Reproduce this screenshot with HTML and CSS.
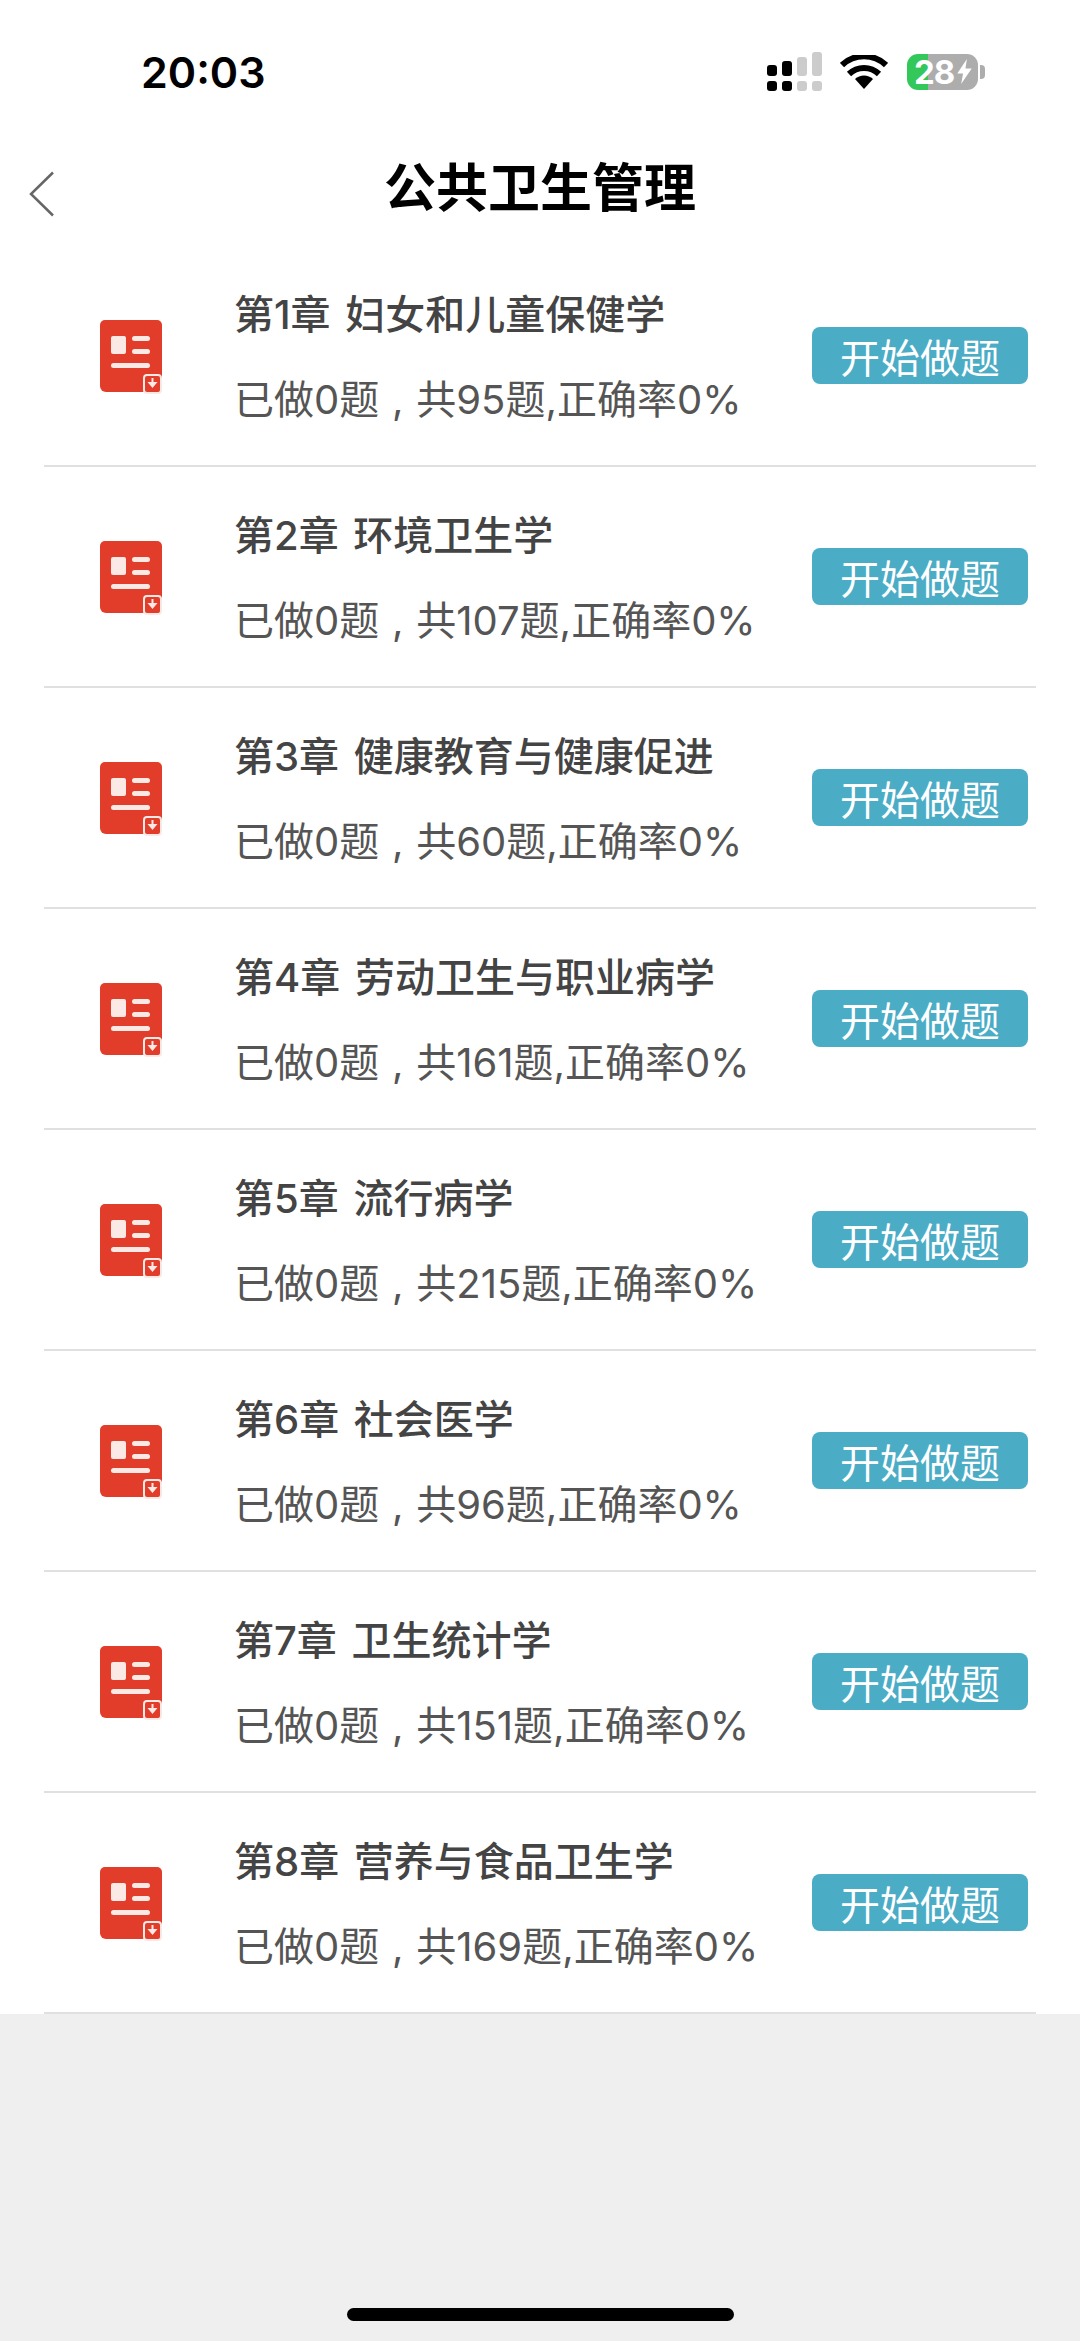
FILE: index.html
```html
<!DOCTYPE html>
<html lang="zh-CN">
<head>
  <meta charset="UTF-8">
  <title>公共卫生管理</title>
  <link rel="stylesheet" href="styles.css">
</head>
<body>
  <svg class="defs" width="0" height="0">
    <symbol id="book" viewBox="0 0 62 74">
      <path fill="#e23c2a" d="M5 0h52a5 5 0 0 1 5 5v62l-2 5H6a6 6 0 0 1-6-6V5a5 5 0 0 1 5-5z"/>
      <rect x="11" y="16" width="15" height="18" rx="2" fill="#fbe9e6"/>
      <rect x="32" y="16" width="18" height="5" rx="2.5" fill="#fbe9e6"/>
      <rect x="32" y="29" width="18" height="5" rx="2.5" fill="#fbe9e6"/>
      <rect x="11" y="43" width="39" height="5" rx="2.5" fill="#fbe9e6"/>
      <rect x="44" y="55" width="17" height="18" rx="3" fill="#e23c2a" stroke="#fbe9e6" stroke-width="2"/>
      <path d="M52.500 58v5" fill="none" stroke="#fbe9e6" stroke-width="2"/>
      <path d="M47.500 62h10l-5 6z" fill="#fbe9e6"/>
    </symbol>
  </svg>

  <div class="status-bar">
    <span class="time">20:03</span>
    <div class="status-icons">
      <svg class="signal" width="55" height="39" viewBox="0 0 55 39">
        <rect x="0" y="13" width="10" height="11" rx="3" fill="#000"/>
        <rect x="15" y="9" width="10" height="15" rx="3" fill="#000"/>
        <rect x="30" y="5" width="10" height="19" rx="3" fill="#ccc"/>
        <rect x="45" y="0" width="10" height="24" rx="3" fill="#ccc"/>
        <rect x="0" y="29" width="10" height="10" rx="3" fill="#000"/>
        <rect x="15" y="29" width="10" height="10" rx="3" fill="#000"/>
        <rect x="30" y="29" width="10" height="10" rx="3" fill="#ccc"/>
        <rect x="45" y="29" width="10" height="10" rx="3" fill="#ccc"/>
      </svg>
      <svg class="wifi" width="48" height="34" viewBox="0 0 48 34">
        <path d="M24 34l-9-10a13 13 0 0 1 18 0z" fill="#000"/>
        <path d="M9 19a21.500 21.500 0 0 1 30 0" fill="none" stroke="#000" stroke-width="6"/>
        <path d="M2 10a32 32 0 0 1 44 0" fill="none" stroke="#000" stroke-width="6"/>
      </svg>
      <div class="battery">
        <div class="battery-body">
          <span class="battery-num">28</span>
          <svg width="17" height="25" viewBox="0 0 15 26"><path d="M10 0L0 15h6l-2 11L15 10H8.500z" fill="#fff"/></svg>
        </div>
        <div class="battery-cap"></div>
      </div>
    </div>
  </div>

  <header class="nav">
    <svg class="back" width="26" height="46" viewBox="0 0 26 46">
      <path d="M24 1.500L2 23l22 21.500" fill="none" stroke="#666" stroke-width="2.500"/>
    </svg>
    <h1>公共卫生管理</h1>
  </header>

  <ul class="list">
    <li class="row">
      <svg class="row-icon"><use href="#book"/></svg>
      <div class="row-text">
        <div class="row-title">第1章 妇女和儿童保健学</div>
        <div class="row-sub">已做0题 , 共95题,正确率0%</div>
      </div>
      <button class="start">开始做题</button>
    </li>
    <li class="row">
      <svg class="row-icon"><use href="#book"/></svg>
      <div class="row-text">
        <div class="row-title">第2章 环境卫生学</div>
        <div class="row-sub">已做0题 , 共107题,正确率0%</div>
      </div>
      <button class="start">开始做题</button>
    </li>
    <li class="row">
      <svg class="row-icon"><use href="#book"/></svg>
      <div class="row-text">
        <div class="row-title">第3章 健康教育与健康促进</div>
        <div class="row-sub">已做0题 , 共60题,正确率0%</div>
      </div>
      <button class="start">开始做题</button>
    </li>
    <li class="row">
      <svg class="row-icon"><use href="#book"/></svg>
      <div class="row-text">
        <div class="row-title">第4章 劳动卫生与职业病学</div>
        <div class="row-sub">已做0题 , 共161题,正确率0%</div>
      </div>
      <button class="start">开始做题</button>
    </li>
    <li class="row">
      <svg class="row-icon"><use href="#book"/></svg>
      <div class="row-text">
        <div class="row-title">第5章 流行病学</div>
        <div class="row-sub">已做0题 , 共215题,正确率0%</div>
      </div>
      <button class="start">开始做题</button>
    </li>
    <li class="row">
      <svg class="row-icon"><use href="#book"/></svg>
      <div class="row-text">
        <div class="row-title">第6章 社会医学</div>
        <div class="row-sub">已做0题 , 共96题,正确率0%</div>
      </div>
      <button class="start">开始做题</button>
    </li>
    <li class="row">
      <svg class="row-icon"><use href="#book"/></svg>
      <div class="row-text">
        <div class="row-title">第7章 卫生统计学</div>
        <div class="row-sub">已做0题 , 共151题,正确率0%</div>
      </div>
      <button class="start">开始做题</button>
    </li>
    <li class="row">
      <svg class="row-icon"><use href="#book"/></svg>
      <div class="row-text">
        <div class="row-title">第8章 营养与食品卫生学</div>
        <div class="row-sub">已做0题 , 共169题,正确率0%</div>
      </div>
      <button class="start">开始做题</button>
    </li>
  </ul>

  <div class="bottom">
    <div class="home-bar"></div>
  </div>
</body>
</html>
```

FILE: styles.css
```css
* {
  box-sizing: border-box;
}
html, body {
  margin: 0;
  padding: 0;
}
body {
  width: 1080px;
  height: 2341px;
  display: flex;
  flex-direction: column;
  background-color: #fff;
  font-family: Inter, "Noto Sans CJK SC", sans-serif;
  overflow: hidden;
}
.defs {
  position: absolute;
}
.status-bar {
  height: 140px;
  flex: none;
  display: flex;
  justify-content: space-between;
  align-items: center;
  padding: 3px 95px 0 141px;
}
.time {
  font-family: Inter, sans-serif;
  font-size: 43px;
  font-weight: 600;
  color: #000;
}
.status-icons {
  display: flex;
  align-items: center;
}
.signal {
  margin-right: 18px;
}
.wifi {
  margin-right: 19px;
}
.battery {
  display: flex;
  align-items: center;
}
.battery-body {
  width: 71px;
  height: 36px;
  border-radius: 11px;
  background: linear-gradient(to right, #34c759 0, #34c759 21px, #adadad 21px);
  display: flex;
  align-items: center;
  padding-left: 7px;
  gap: 2px;
}
.battery-num {
  font-family: Inter, sans-serif;
  font-size: 33px;
  line-height: 36px;
  font-weight: 700;
  letter-spacing: -1px;
  color: #fff;
}
.battery-cap {
  width: 5px;
  height: 14px;
  margin-left: 2px;
  border-radius: 0 4px 4px 0;
  background-color: #adadad;
}
.nav {
  height: 106px;
  flex: none;
  display: flex;
  align-items: center;
  justify-content: center;
  position: relative;
  padding-bottom: 18px;
}
.back {
  position: absolute;
  left: 29px;
  top: 31px;
}
.nav h1 {
  margin: 0;
  font-size: 52px;
  font-weight: 700;
  color: #000;
}
.list {
  list-style: none;
  margin: 0;
  padding: 0 44px;
  flex: none;
}
.row {
  height: 221px;
  display: flex;
  align-items: center;
  border-bottom: 2px solid #e0e0e0;
}
.row-icon {
  width: 62px;
  height: 74px;
  flex: none;
  margin: 2px 0 0 56px;
}
.row-text {
  flex: 1;
  margin-left: 72px;
  padding-top: 3px;
  display: flex;
  flex-direction: column;
  gap: 41px;
  min-width: 0;
}
.row-title {
  font-size: 40px;
  line-height: 44px;
  font-weight: 500;
  word-spacing: 4px;
  color: #444;
  white-space: nowrap;
}
.row-sub {
  font-size: 40px;
  line-height: 44px;
  word-spacing: 1.5px;
  color: #555;
  white-space: nowrap;
}
.start {
  width: 216px;
  height: 57px;
  flex: none;
  margin-right: 8px;
  padding: 0 0 3px;
  border: none;
  border-radius: 8px;
  background-color: #4bacc6;
  color: #fff;
  font-family: inherit;
  font-size: 40px;
}
.bottom {
  flex: 1;
  background-color: #efefef;
  position: relative;
}
.home-bar {
  position: absolute;
  left: 347px;
  bottom: 20px;
  width: 387px;
  height: 13px;
  border-radius: 7px;
  background-color: #000;
}
```
